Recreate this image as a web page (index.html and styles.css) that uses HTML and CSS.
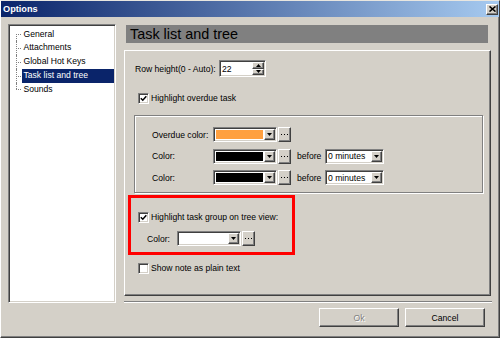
FILE: index.html
```html
<!DOCTYPE html>
<html>
<head>
<meta charset="utf-8">
<title>Options</title>
<link rel="stylesheet" href="styles.css">
</head>
<body>
<div class="window">
  <div class="titlebar">
    <span class="title">Options</span>
    <span class="close"><svg width="7" height="6" viewBox="0 0 7 6"><path d="M0.5 0.5L6.5 5.5M6.5 0.5L0.5 5.5" stroke="#000" stroke-width="1.6" fill="none"/></svg></span>
  </div>
  <div class="main">
    <div class="tree">
      <div class="node first">General</div>
      <div class="node">Attachments</div>
      <div class="node">Global Hot Keys</div>
      <div class="node sel">Task list and tree</div>
      <div class="node last">Sounds</div>
    </div>
    <div class="right">
      <div class="header">Task list and tree</div>
      <div class="panel">
        <div class="rowh">
          <span class="lbl-rh">Row height(0 - Auto):</span>
          <span class="spin">
            <span class="spin-val">22</span>
            <span class="spinbtns">
              <span class="sbtn"><svg width="5" height="3" viewBox="0 0 5 3"><path d="M0 3H5L2.5 0Z" fill="#000"/></svg></span>
              <span class="sbtn"><svg width="5" height="3" viewBox="0 0 5 3"><path d="M0 0H5L2.5 3Z" fill="#000"/></svg></span>
            </span>
          </span>
        </div>
        <div class="chk chk-overdue">
          <span class="cb"><svg width="7" height="7" viewBox="0 0 7 7"><path d="M0.8 3.2L2.8 5.2L6.3 1.3" stroke="#000" stroke-width="1.5" fill="none"/></svg></span>
          <span>Highlight overdue task</span>
        </div>
        <div class="group">
          <div class="crow">
            <span class="lbl">Overdue color:</span>
            <span class="picker">
              <span class="cbox"><span class="swatch sw-orange"></span><span class="darr"><svg width="5" height="3" viewBox="0 0 5 3"><path d="M0 0H5L2.5 3Z" fill="#000"/></svg></span></span>
              <span class="dots"><svg width="7" height="1" viewBox="0 0 7 1"><rect x="0" y="0" width="1" height="1"/><rect x="3" y="0" width="1" height="1"/><rect x="6" y="0" width="1" height="1"/></svg></span>
            </span>
          </div>
          <div class="crow">
            <span class="lbl">Color:</span>
            <span class="picker">
              <span class="cbox"><span class="swatch sw-black"></span><span class="darr"><svg width="5" height="3" viewBox="0 0 5 3"><path d="M0 0H5L2.5 3Z" fill="#000"/></svg></span></span>
              <span class="dots"><svg width="7" height="1" viewBox="0 0 7 1"><rect x="0" y="0" width="1" height="1"/><rect x="3" y="0" width="1" height="1"/><rect x="6" y="0" width="1" height="1"/></svg></span>
            </span>
            <span class="before">before</span>
            <span class="mins"><span class="mins-val">0 minutes</span><span class="darr"><svg width="5" height="3" viewBox="0 0 5 3"><path d="M0 0H5L2.5 3Z" fill="#000"/></svg></span></span>
          </div>
          <div class="crow">
            <span class="lbl">Color:</span>
            <span class="picker">
              <span class="cbox"><span class="swatch sw-black"></span><span class="darr"><svg width="5" height="3" viewBox="0 0 5 3"><path d="M0 0H5L2.5 3Z" fill="#000"/></svg></span></span>
              <span class="dots"><svg width="7" height="1" viewBox="0 0 7 1"><rect x="0" y="0" width="1" height="1"/><rect x="3" y="0" width="1" height="1"/><rect x="6" y="0" width="1" height="1"/></svg></span>
            </span>
            <span class="before">before</span>
            <span class="mins"><span class="mins-val">0 minutes</span><span class="darr"><svg width="5" height="3" viewBox="0 0 5 3"><path d="M0 0H5L2.5 3Z" fill="#000"/></svg></span></span>
          </div>
        </div>
        <div class="hl">
          <div class="chk chk-inner">
            <span class="cb"><svg width="7" height="7" viewBox="0 0 7 7"><path d="M0.8 3.2L2.8 5.2L6.3 1.3" stroke="#000" stroke-width="1.5" fill="none"/></svg></span>
            <span>Highlight task group on tree view:</span>
          </div>
          <div class="crow crow-hl">
            <span class="lbl-hl">Color:</span>
            <span class="picker">
              <span class="cbox"><span class="swatch sw-white"></span><span class="darr"><svg width="5" height="3" viewBox="0 0 5 3"><path d="M0 0H5L2.5 3Z" fill="#000"/></svg></span></span>
              <span class="dots"><svg width="7" height="1" viewBox="0 0 7 1"><rect x="0" y="0" width="1" height="1"/><rect x="3" y="0" width="1" height="1"/><rect x="6" y="0" width="1" height="1"/></svg></span>
            </span>
          </div>
        </div>
        <div class="chk chk-note">
          <span class="cb"></span>
          <span>Show note as plain text</span>
        </div>
      </div>
      <div class="sep"></div>
      <div class="buttons">
        <span class="btn disabled">Ok</span>
        <span class="btn">Cancel</span>
      </div>
    </div>
  </div>
</div>
</body>
</html>
```
FILE: styles.css
```css
* { box-sizing: border-box; }
html, body { margin: 0; padding: 0; }
body {
  width: 500px;
  height: 338px;
  overflow: hidden;
  background: #d4d0c8;
  font-family: "Liberation Sans", Arial, sans-serif;
  font-size: 8.6px;
  color: #000;
}
.window {
  width: 500px;
  height: 338px;
  border: 1px solid;
  border-color: #e8e6e0 #404040 #404040 #ffffff;
  box-shadow: inset -1px -1px #808080;
  display: flex;
  flex-direction: column;
}
.titlebar {
  height: 16px;
  flex: none;
  background: linear-gradient(to right, #0a246a, #a6caf0);
  display: flex;
  align-items: center;
  justify-content: space-between;
  padding: 0 1px 0 2px;
}
.title { color: #fff; font-weight: bold; font-size: 9.2px; }
.close {
  width: 12px;
  height: 11px;
  background: #d4d0c8;
  border: 1px solid;
  border-color: #fff #404040 #404040 #fff;
  box-shadow: inset -1px -1px #808080;
  display: flex;
  align-items: center;
  justify-content: center;
}
.main {
  display: flex;
  padding: 7px 0 0 7px;
  gap: 8px;
}
/* sunken look */
.tree, .spin, .cbox, .mins, .cb {
  border: 1px solid;
  border-color: #808080 #fff #fff #808080;
  box-shadow: inset 1px 1px #404040, inset -1px -1px #d4d0c8;
}
.tree {
  width: 108px;
  height: 279px;
  background: #fff;
  padding: 2.5px 1px 0 13px;
}
.node {
  position: relative;
  height: 13.75px;
  line-height: 13.75px;
  padding-left: 1.5px;
  white-space: nowrap;
}
.node::before {
  content: "";
  position: absolute;
  left: -6px;
  top: 50%;
  width: 5px;
  border-top: 1px dotted #808080;
}
.node::after {
  content: "";
  position: absolute;
  left: -6px;
  top: 0;
  height: 100%;
  border-left: 1px dotted #808080;
}
.node.first::after { top: 50%; height: 50%; }
.node.last::after { height: 50%; }
.node.sel { background: #0a246a; color: #fff; }

.right {
  width: 368px;
  display: flex;
  flex-direction: column;
}
.header {
  margin: 1px 0 0 2px;
  width: 362px;
  height: 18px;
  background: #808080;
  font-size: 14.4px;
  line-height: 18px;
  padding-left: 4px;
  white-space: nowrap;
}
/* raised look */
.panel, .darr, .dots, .sbtn, .btn {
  border: 1px solid;
  border-color: #fff #404040 #404040 #fff;
  box-shadow: inset -1px -1px #808080;
  background: #d4d0c8;
}
.panel {
  margin-top: 7px;
  width: 367px;
  height: 246px;
}
.sep {
  margin-top: 5px;
  height: 2px;
  border-top: 1px solid #808080;
  border-bottom: 1px solid #fff;
}
.buttons {
  margin-top: 5px;
  display: flex;
  justify-content: flex-end;
  gap: 6px;
  padding-right: 7px;
}
.btn {
  width: 80px;
  height: 19px;
  display: flex;
  align-items: center;
  justify-content: center;
}
.btn.disabled { color: #808080; text-shadow: 1px 1px #fff; }

.rowh {
  display: flex;
  align-items: center;
  height: 17px;
  margin: 9px 0 0 10px;
}
.lbl-rh { width: 84px; white-space: nowrap; }
.spin {
  width: 47px;
  height: 17px;
  background: #fff;
  padding: 1px;
  display: flex;
  align-items: stretch;
}
.spin-val { flex: 1; padding-left: 1px; display: flex; align-items: center; }
.spinbtns { width: 12px; display: flex; flex-direction: column; }
.sbtn { flex: 1; display: flex; align-items: center; justify-content: center; }
.sbtn svg { display: block; }

.chk {
  display: flex;
  align-items: center;
  height: 14px;
  gap: 2px;
  white-space: nowrap;
}
.chk-overdue { margin: 14px 0 0 13px; }
.chk-note { margin: 6px 0 0 13px; }
.cb {
  width: 11px;
  height: 11px;
  background: #fff;
  display: flex;
  align-items: center;
  justify-content: center;
  flex: none;
}
.cb svg { display: block; }

.group {
  margin: 10px 0 0 9px;
  width: 349px;
  height: 78px;
  border: 1px solid #808080;
  box-shadow: inset 1px 1px #fff, 1px 1px #fff;
  padding: 11px 0 0 17px;
  display: flex;
  flex-direction: column;
  gap: 6.5px;
}
.crow {
  display: flex;
  align-items: center;
  height: 15px;
  white-space: nowrap;
}
.lbl { width: 61px; }
.picker { display: flex; gap: 1px; height: 15px; }
.cbox {
  width: 64px;
  height: 15px;
  background: #fff;
  padding: 1px;
  display: flex;
}
.swatch { flex: 1; margin: 1px; }
.sw-orange { background: #ffa040; }
.sw-black { background: #000; }
.sw-white { background: #fff; }
.darr {
  width: 11px;
  flex: none;
  display: flex;
  align-items: center;
  justify-content: center;
}
.darr svg, .dots svg { display: block; }
.dots {
  width: 13px;
  height: 15px;
  display: flex;
  align-items: center;
  justify-content: center;
}
.before { width: 34px; padding-left: 6px; }
.mins {
  width: 59px;
  height: 15px;
  background: #fff;
  padding: 1px;
  display: flex;
}
.mins-val { flex: 1; padding-left: 1px; display: flex; align-items: center; }

.hl {
  margin: 2px 0 0 3px;
  width: 167px;
  height: 60px;
  border: 3px solid #ff0000;
  padding: 12px 0 0 7px;
}
.crow-hl { margin: 7px 0 0 9px; }
.lbl-hl { width: 30px; }
```
